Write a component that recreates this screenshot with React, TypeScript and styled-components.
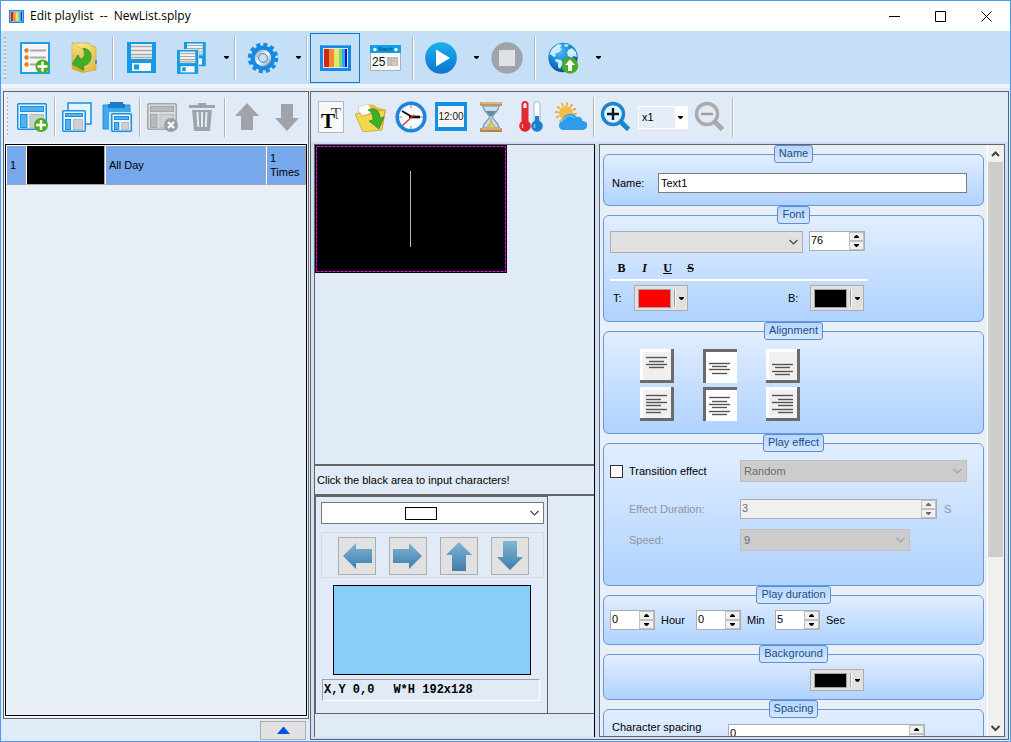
import React from "react";
import styled, { createGlobalStyle } from "styled-components";

const GlobalStyle = createGlobalStyle`
  *, *::before, *::after { box-sizing: border-box; }
  body { margin: 0; }
  body, button, input, select {
    font-family: "Liberation Sans", Arial, sans-serif;
    font-size: 11px;
    line-height: 14px;
    color: #000;
  }
  button { padding: 0; border: 0; background: none; }
  svg { display: block; flex: none; }
`;

const LINE = "#646464";

/* ---------- Window frame ---------- */

const Window = styled.div`
  display: flex;
  flex-direction: column;
  height: 100vh;
  border: 1px solid #4a9cf0;
  background: #e1ebf7;
  overflow: hidden;
`;

const TitleBar = styled.header`
  display: flex;
  align-items: center;
  flex: none;
  height: 30px;
  padding: 0 1px 0 8px;
  background: #fff;
`;

const Title = styled.h1`
  flex: 1;
  margin: 0 0 0 6px;
  font: 400 12px/16px "Open Sans", "Noto Sans", sans-serif;
  white-space: pre;
`;

const WindowButton = styled.button`
  display: grid;
  place-items: center;
  width: 46px;
  height: 28px;
`;

/* ---------- Toolbars ---------- */

const MainToolbar = styled.nav`
  display: flex;
  align-items: center;
  flex: none;
  height: 57px;
  padding: 0 0 4px 3px;
  background: linear-gradient(#c5dff6 53px, #edf5fd 53px);
`;

const PaneToolbar = styled.nav<{ $inset?: number }>`
  display: flex;
  align-items: center;
  flex: none;
  height: 50px;
  padding-left: ${(p) => p.$inset ?? 0}px;
  background: #e1ebf7;
`;

const Grip = styled.span<{ $size: number }>`
  width: 2px;
  height: ${(p) => p.$size}px;
  margin-right: 4px;
  background: repeating-linear-gradient(#b4b9c0 0 2px, #eef4fb 2px 4px);
`;

const ToolButton = styled.button<{ $size: number; $active?: boolean }>`
  display: grid;
  place-items: center;
  flex: none;
  width: ${(p) => p.$size}px;
  height: ${(p) => p.$size}px;
  border: 1px solid ${(p) => (p.$active ? "#0b7bd8" : "transparent")};
`;

const CaretButton = styled.button`
  display: flex;
  align-items: center;
  justify-content: flex-end;
  width: 16px;
  height: 48px;
  padding-right: 3px;
`;

const Separator = styled.span<{ $size: number; $slot: number }>`
  flex: none;
  width: ${(p) => p.$slot}px;
  height: ${(p) => p.$size}px;
  background: linear-gradient(90deg, #b4b8be 1px, #fff 1px) center / 2px 100% no-repeat;
`;

const ZoomBox = styled.div`
  display: grid;
  align-items: center;
  width: 50px;
  height: 23px;
  margin: 0 2px;
  border: 1px solid #fff;
  background: linear-gradient(90deg, #e6edf7 36px, #fff 36px);
  & > * { grid-area: 1 / 1; }
  & > svg { justify-self: end; margin-right: 4px; pointer-events: none; }
  select {
    appearance: none;
    width: 100%;
    padding: 0 3px;
    border: 0;
    background: none;
  }
`;

/* ---------- Work area ---------- */

const Workspace = styled.main`
  display: grid;
  grid-template-columns: 308px 1fr;
  flex: 1;
  min-height: 0;
  padding-top: 3px;
`;

const LeftColumn = styled.section`
  display: flex;
  flex-direction: column;
  min-height: 0;
  padding-left: 2px;
`;

const PlaylistPane = styled.div`
  display: flex;
  flex-direction: column;
  flex: 1;
  min-height: 0;
  padding: 0 1px 2px;
  border: 1px solid ${LINE};
  background: #f1f5fb;
`;

const ListBox = styled.div`
  flex: 1;
  margin-top: 2px;
  border: 1px solid #000;
  background: #e8eff7;
`;

const PlayTable = styled.table`
  width: 100%;
  border-spacing: 0;
  table-layout: fixed;
`;

const Cell = styled.td<{ $width?: number }>`
  width: ${(p) => (p.$width ? `${p.$width}px` : "auto")};
  height: 40px;
  padding: 0 3px;
  border: 1px solid #a3a6ab;
  border-top-color: #fff;
  border-left-color: #fff;
  background: #78a8ec;
`;

const ThumbCell = styled(Cell)`
  background: #000;
`;

const ListFooter = styled.footer`
  display: flex;
  justify-content: flex-end;
  align-items: center;
  flex: none;
  height: 22px;
  padding-right: 3px;
`;

const ExpandButton = styled.button`
  display: grid;
  place-items: center;
  width: 46px;
  height: 19px;
  border: 1px solid #adadad;
  background: #e1e1e1;
`;

const EditorPane = styled.section`
  display: flex;
  flex-direction: column;
  min-width: 0;
  min-height: 0;
  margin: 0 1px 1px;
  border: 1px solid ${LINE};
  background: #d0dff8;
`;

const EditorBody = styled.div`
  display: grid;
  grid-template-columns: 281px 1fr;
  column-gap: 4px;
  flex: 1;
  min-height: 0;
  margin: 2px 3px 2px 3px;
`;

const StageColumn = styled.div`
  display: flex;
  flex-direction: column;
  min-height: 0;
  border-top: 1px solid ${LINE};
  border-left: 1px solid ${LINE};
  border-right: 1px solid #000;
  background: #e1ebf7;
`;

const Stage = styled.div`
  flex: 1;
  min-height: 0;
  overflow: hidden;
`;

const Hint = styled.p`
  flex: none;
  height: 32px;
  margin: 0;
  padding: 7px 2px;
  border: solid ${LINE};
  border-width: 2px 0;
`;

const NavRow = styled.div`
  flex: none;
  margin-bottom: 23px;
  border-bottom: 1px solid ${LINE};
`;

const NavPanel = styled.div`
  display: flex;
  flex-direction: column;
  width: 233px;
  height: 217px;
  padding: 5px 3px 0 5px;
  border: solid ${LINE};
  border-width: 1px 1px 0;
`;

const ArrowGroup = styled.div`
  display: flex;
  justify-content: space-between;
  margin: 8px 0 7px;
  padding: 4px 14px 2px 16px;
  border: 1px solid #d8dadd;
`;

const ArrowButton = styled.button`
  display: grid;
  place-items: center;
  width: 38px;
  height: 38px;
  border: 1px solid #adadad;
  background: #e1e1e1;
`;

const Preview = styled.div`
  width: 198px;
  height: 90px;
  margin-left: 12px;
  border: 1px solid #000;
  background: #87cefa;
`;

const Coordinates = styled.div`
  display: flex;
  align-items: center;
  gap: 19px;
  height: 22px;
  margin: 4px 4px 0 1px;
  padding: 0 1px;
  border: 1px solid #fff;
  border-top-color: #a0a0a0;
  border-left-color: #a0a0a0;
  font: 700 12px/14px "Liberation Mono", monospace;
`;

/* ---------- Properties ---------- */

const Properties = styled.aside`
  display: flex;
  min-width: 0;
  min-height: 0;
  padding-right: 1px;
  border: 1px solid ${LINE};
  background: #e8eff7;
`;

const PropertyList = styled.div`
  flex: 1;
  min-width: 0;
  padding: 0 3px;
  overflow-y: auto;
  scrollbar-width: none;
`;

const Group = styled.fieldset<{ $size: number }>`
  min-width: 0;
  height: ${(p) => p.$size}px;
  margin: 0;
  padding: 0 6px;
  border: 1px solid #6a98d8;
  border-radius: 6px;
  background: linear-gradient(#e2eeff, #afd2ff);
`;

const Legend = styled.legend`
  height: 18px;
  margin: 0 auto;
  padding: 0 4px;
  border: 1px solid #5b8dd3;
  border-radius: 3px;
  background: linear-gradient(#b8d5fc, #d5e7ff);
  color: #15508a;
  line-height: 15px;
`;

const Row = styled.div<{ $top?: number; $gap?: number; $left?: number; $right?: number; $start?: boolean }>`
  display: flex;
  align-items: ${(p) => (p.$start ? "flex-start" : "center")};
  gap: ${(p) => p.$gap ?? 0}px;
  padding: ${(p) => `${p.$top ?? 0}px ${p.$right ?? 0}px 0 ${p.$left ?? 0}px`};
`;

const Label = styled.label<{ $width?: number; $dim?: boolean }>`
  flex: none;
  width: ${(p) => (p.$width ? `${p.$width}px` : "auto")};
  color: ${(p) => (p.$dim ? "#8f959d" : "#000")};
`;

const TextInput = styled.input`
  flex: 1;
  min-width: 0;
  height: 20px;
  padding: 0 2px;
  border: 1px solid #7a7a7a;
  background: #fff;
`;

const SelectShell = styled.div<{ $width?: number; $tone: "light" | "grey" | "dim" }>`
  display: grid;
  align-items: center;
  width: ${(p) => (p.$width ? `${p.$width}px` : "100%")};
  height: 22px;
  border: 1px solid ${(p) => ({ light: "#7a7a7a", grey: "#adadad", dim: "#bfbfbf" })[p.$tone]};
  background: ${(p) => ({ light: "#fff", grey: "#e1e1e1", dim: "#cccccc" })[p.$tone]};
  & > * { grid-area: 1 / 1; }
  & > svg { justify-self: end; margin-right: 3px; pointer-events: none; }
  select {
    appearance: none;
    width: 100%;
    height: 20px;
    padding: 0 3px;
    border: 0;
    background: none;
    color: #6d6d6d;
    opacity: 1;
  }
`;

const ShapeSwatch = styled.span`
  justify-self: center;
  width: 32px;
  height: 13px;
  margin-right: 24px;
  border: 1px solid #000;
  pointer-events: none;
`;

const SpinShell = styled.div<{ $width: number; $dim?: boolean }>`
  display: flex;
  flex: none;
  width: ${(p) => p.$width}px;
  height: 20px;
  border: 1px solid #abadb3;
  background: ${(p) => (p.$dim ? "#f0f0f0" : "#fff")};
  input {
    flex: 1;
    min-width: 0;
    padding: 0 0 2px 1px;
    border: 0;
    background: none;
    color: ${(p) => (p.$dim ? "#6d6d6d" : "#000")};
  }
`;

const SpinButtons = styled.span`
  display: flex;
  flex-direction: column;
  width: 15px;
  button {
    display: grid;
    place-items: center;
    flex: 1;
    border: 1px solid #c0c0c0;
    background: #f0f0f0;
  }
`;

const FormatButton = styled.button<{ $look: "b" | "i" | "u" | "s" }>`
  width: 23px;
  height: 20px;
  font: 700 12px/20px "Liberation Serif", serif;
  font-style: ${(p) => (p.$look === "i" ? "italic" : "normal")};
  text-decoration: ${(p) => ({ b: "none", i: "none", u: "underline", s: "line-through" })[p.$look]};
`;

const ColorButton = styled.button<{ $size: number }>`
  display: flex;
  align-items: center;
  flex: none;
  width: 54px;
  height: ${(p) => p.$size}px;
  padding: 3px;
  border: 1px solid #adadad;
  background: #e1e1e1;
`;

const Swatch = styled.span<{ $color: string; $size: number }>`
  width: 34px;
  height: ${(p) => p.$size}px;
  border: 1px solid #a0a0a0;
  background: ${(p) => p.$color};
`;

const Divider = styled.hr`
  width: 258px;
  height: 2px;
  margin: 1px 0 4px;
  border: 0;
  background: #fff;
`;

const ColorRow = styled.div`
  display: flex;
  align-items: center;
  justify-content: space-between;
  width: 254px;
  padding-left: 3px;
`;

const AlignGrid = styled.div`
  display: grid;
  grid-template-columns: repeat(3, 34px);
  gap: 4px 29px;
  padding: 9px 0 0 30px;
`;

const AlignButton = styled.button<{ $on?: boolean }>`
  height: 34px;
  padding: ${(p) => (p.$on ? "0" : "3px 0 0 3px")};
  border: solid #6b6b6b;
  border-width: ${(p) => (p.$on ? "3px 0 0 3px" : "0 3px 3px 0")};
  box-shadow: ${(p) => (p.$on ? "none" : "inset 3px 3px #fff")};
  background: ${(p) => (p.$on ? "#fff" : "#f0f0f0")};
`;

const CheckLabel = styled.label`
  display: flex;
  align-items: center;
  gap: 6px;
  flex: none;
  width: 130px;
  input {
    appearance: none;
    width: 13px;
    height: 13px;
    margin: 0;
    border: 1px solid #333;
    background: #fff;
  }
`;

const ScrollTrack = styled.div`
  display: flex;
  flex-direction: column;
  flex: none;
  width: 16px;
  border-left: 1px solid #fff;
  background: #f0f0f0;
`;

const ScrollButton = styled.button`
  display: grid;
  place-items: center;
  height: 17px;
`;

const ScrollRail = styled.div`
  flex: 1;
`;

const ScrollThumb = styled.div`
  height: 71%;
  background: #cdcdcd;
`;

/* ---------- Small glyphs ---------- */

const Caret = () => (
  <svg width="5" height="3" viewBox="0 0 5 3"><path d="M0 0h5v1L3 3H2L0 1z" /></svg>
);

const Chevron = ({ up, color = "#444", w = 1.2 }: { up?: boolean; color?: string; w?: number }) => (
  <svg width="11" height="8" viewBox="0 0 11 8">
    <path d={up ? "M2 6l3.5-3.5L9 6" : "M1.500 2l4 4 4-4"} fill="none" stroke={color} strokeWidth={w} />
  </svg>
);

const Triangle = ({ up, color = "#000" }: { up?: boolean; color?: string }) => (
  <svg width="5" height="3" viewBox="0 0 5 3"><path d={up ? "M0 3V2l2-2h1l2 2v1z" : "M0 0v1l2 2h1l2-2V0z"} fill={color} /></svg>
);

/* ---------- Icons ---------- */

const Plus = ({ x, y, r = 7 }: { x: number; y: number; r?: number }) => (
  <g>
    <circle cx={x} cy={y} r={r} fill="#4aac27" />
    <path d={`M${x - 5} ${y}h10M${x} ${y - 5}v10`} stroke="#fff" strokeWidth="2.4" />
  </g>
);

const SpectrumIcon = ({ width, height }: { width: number; height: number }) => (
  <svg width={width} height={height} viewBox="0 0 31 26" preserveAspectRatio="none">
    <rect width="31" height="26" fill="#1689e6" />
    <rect x="3" y="3" width="25" height="20" fill="#dfe6ea" />
    <path d="M4 4h5v18H4z" fill="#d9260f" />
    <path d="M9 4h5v18H9z" fill="#ee8b35" />
    <path d="M14 4h5v18h-5z" fill="#e9e56a" />
    <path d="M19 4h3v18h-3z" fill="#6fdc84" />
    <path d="M22 4h3v18h-3z" fill="#35a5ee" />
    <path d="M25 4h2v18h-2z" fill="#1010e0" />
    <path d="M1 .5h29" stroke="#47a9f2" />
  </svg>
);

const NewListIcon = () => (
  <svg width="32" height="32" viewBox="0 0 32 32">
    <rect x="2" y="1" width="28" height="30" fill="#f6f6f6" stroke="#1b9fea" strokeWidth="2" />
    {[8, 15, 22].map((y) => (
      <g key={y}>
        <circle cx="7.500" cy={y + 0.5} r="2.200" fill="#ee7a1c" />
        <path d={`M11 ${y + 0.5}h16`} stroke="#a9a9a9" strokeWidth="2" />
      </g>
    ))}
    <Plus x={23.5} y={24.500} />
  </svg>
);

const OpenIcon = () => (
  <svg width="28" height="32" viewBox="0 0 28 32">
    <defs>
      <linearGradient id="openFolder" x1="0" y1="0" x2="1" y2="1">
        <stop offset="0" stopColor="#fdf0a0" /><stop offset="1" stopColor="#e3b53a" />
      </linearGradient>
      <linearGradient id="openCover" x1="0" y1="0" x2="0" y2="1">
        <stop offset="0" stopColor="#f8e588" /><stop offset="1" stopColor="#cf9d22" />
      </linearGradient>
    </defs>
    <path d="M1 1h17l2 3 5 1v23l-12 2z" fill="url(#openFolder)" stroke="#cfa93c" strokeWidth=".8" />
    <path d="M24 18h2v4h-2z" fill="#4a8fdc" />
    <path d="M1 1l12 7v23L1 27z" fill="url(#openCover)" stroke="#d6b64c" strokeWidth=".8" />
    <path d="M12 6c6 1 9 5 8 10-1 5-4 7-8 8l1 4L1 22l6-9 2 4c5 0 6-6 3-11z" fill="#3fae2a" stroke="#22871a" strokeWidth=".6" />
  </svg>
);

const Disk = () => (
  <g>
    <path d="M0 0h29v31H0z" fill="#149be6" />
    <path d="M4 2h21v15H4z" fill="#f1f1f1" />
    <path d="M4 4.500h21M4 8.500h21M4 12.500h21M4 15.500h21" stroke="#a7a9ab" strokeWidth="1.500" />
    <path d="M5 21h19v8H5z" fill="#f7f7f7" />
    <path d="M7 22.500h5v5H7z" fill="#149be6" />
  </g>
);

const SaveIcon = () => <svg width="29" height="31" viewBox="0 0 29 31"><Disk /></svg>;

const SaveAllIcon = () => (
  <svg width="30" height="32" viewBox="0 0 30 32">
    <g transform="translate(8) scale(.75 .78)"><Disk /></g>
    <path d="M0 7h23v25H0z" fill="#c5dff6" />
    <g transform="translate(1 8) scale(.73 .77)"><Disk /></g>
  </svg>
);

const GearIcon = () => (
  <svg width="32" height="32" viewBox="0 0 32 32">
    <defs>
      <linearGradient id="gearRing" x1="0" y1="0" x2="1" y2="1">
        <stop offset="0" stopColor="#a2abb5" /><stop offset=".5" stopColor="#fff" /><stop offset="1" stopColor="#98a4b0" />
      </linearGradient>
    </defs>
    <circle cx="16" cy="16" r="13.500" fill="none" stroke="#128be0" strokeWidth="3.500" strokeDasharray="4 3.070" />
    <circle cx="16" cy="16" r="12.400" fill="#128be0" />
    <circle cx="16" cy="16" r="6.300" fill="none" stroke="url(#gearRing)" strokeWidth="4" />
    <circle cx="16" cy="16" r="4.400" fill="#c5e0f5" stroke="#3f87c4" strokeWidth="1" />
  </svg>
);

const CalendarIcon = () => (
  <svg width="31" height="26" viewBox="0 0 31 26">
    <path d="M.500 .500h30v25H.500z" fill="#f7f8f8" stroke="#aab0b6" />
    <path d="M0 0h31v8H0z" fill="#11a0e8" />
    <circle cx="5" cy="4.500" r="1.700" fill="#fff" /><circle cx="26" cy="4.500" r="1.700" fill="#fff" />
    <text x="15.500" y="6" fontSize="5" textAnchor="middle" fill="#063a64">March</text>
    <text x="2" y="21" fontSize="12" fill="#111">25</text>
    <path d="M17 12h11v9H17z" fill="#b6b6b6" />
    <path d="M17 15h11M17 18h11M20 12v9M23 12v9M26 12v9" stroke="#d5d5d5" strokeWidth=".6" />
    <path d="M22 17h4v3h-4z" fill="#efc6a6" />
  </svg>
);

const PlayIcon = () => (
  <svg width="32" height="32" viewBox="0 0 32 32">
    <defs>
      <linearGradient id="play" x1="0" y1="0" x2="0" y2="1">
        <stop offset="0" stopColor="#19b0f3" /><stop offset="1" stopColor="#0b75cc" />
      </linearGradient>
    </defs>
    <circle cx="16" cy="16" r="15.800" fill="url(#play)" />
    <path d="M11 7.500L25 16 11 24.500z" fill="#fff" />
  </svg>
);

const StopIcon = () => (
  <svg width="32" height="32" viewBox="0 0 32 32">
    <circle cx="16" cy="16" r="15.700" fill="#9fa4aa" />
    <path d="M8 8h16v16H8z" fill="#dfe2e5" />
  </svg>
);

const GlobeIcon = () => (
  <svg width="31" height="32" viewBox="0 0 31 32">
    <defs>
      <radialGradient id="globe" cx=".4" cy=".3" r=".7">
        <stop offset="0" stopColor="#4cbcf2" /><stop offset=".6" stopColor="#1183d4" /><stop offset="1" stopColor="#0a4ca0" />
      </radialGradient>
    </defs>
    <circle cx="15" cy="15.500" r="14.700" fill="url(#globe)" />
    <path d="M4 7l6-5 4 1-2 3 2 1-3 3-4 2 1 2-2 1-4-3-1 1zM17 2l4 1-2 2-3-1zM20 8l4-2 4 4 1 5-4-1-1 2-4-2-1-3zM8 17l5 1 2 3-3 6-2-2 0-4-3-2z" fill="#cfeafb" />
    <circle cx="22" cy="23.500" r="8.300" fill="#4aab26" />
    <path d="M22 17.500l5 5.500h-3v6h-4v-6h-3z" fill="#fff" />
  </svg>
);

const Layout = ({ w, h, grey }: { w: number; h: number; grey?: boolean }) => {
  const line = grey ? "#a3a7ac" : "#1d8fe0";
  const fill = grey ? "#b6babf" : "#4fb4ee";
  return (
    <g>
      <rect x=".750" y=".750" width={w - 1.5} height={h - 1.5} rx="1" fill={grey ? "#d9dcdf" : "#e6f5fe"} stroke={line} strokeWidth="1.500" />
      <rect x="3.500" y="3.500" width={w - 7} height={h > 24 ? 5 : 3} fill={fill} stroke={line} />
      <rect x="3.500" y={h > 24 ? 11.5 : 9.5} width={w / 4 - 1} height={h > 24 ? h - 14 : h - 12} fill={fill} stroke={line} />
      <rect x={w / 4 + 5.5} y={h > 24 ? 11.5 : 9.5} width={w * 0.75 - 9} height={h > 24 ? h - 14 : h - 12} fill="#cfcfcf" stroke="#b9bbbd" />
    </g>
  );
};

const AddProgramIcon = () => (
  <svg width="32" height="32" viewBox="0 0 32 32">
    <g transform="translate(1 2)"><Layout w={30} h={27} /></g>
    <Plus x={25} y={24} />
  </svg>
);

const CopyIcon = () => (
  <svg width="30" height="30" viewBox="0 0 30 30">
    <rect x="6" y="1" width="23" height="21" fill="#e3f4fe" stroke="#1d8fe0" strokeWidth="1.500" />
    <g transform="translate(0 8)"><Layout w={24} h={22} /></g>
  </svg>
);

const PasteIcon = () => (
  <svg width="31" height="31" viewBox="0 0 31 31">
    <path d="M1 3h27v24H1z" fill="#3fa9ea" stroke="#1d8fe0" />
    <path d="M8 0h13v2h2v4H6V2h2z" fill="#1b7cc8" />
    <path d="M7 10h24v21H7z" fill="#c8e6fa" />
    <g transform="translate(9 11)"><Layout w={21} h={19} /></g>
  </svg>
);

const RemoveProgramIcon = () => (
  <svg width="32" height="32" viewBox="0 0 32 32">
    <g transform="translate(1 2)"><Layout w={30} h={27} grey /></g>
    <circle cx="25" cy="24" r="7" fill="#9b9fa4" />
    <path d="M22 21l6 6M28 21l-6 6" stroke="#fff" strokeWidth="2.200" />
  </svg>
);

const TrashIcon = () => (
  <svg width="26" height="28" viewBox="0 0 26 28">
    <path d="M9 0h8v2h9v3H0V2h9zM3 7h20l-2 21H5z" fill="#a0a4aa" />
    <path d="M8.500 9l.8 15M13 9v15M17.500 9l-.8 15" stroke="#e1ebf7" strokeWidth="2" />
  </svg>
);

const turns = { up: 0, right: 90, down: 180, left: 270 };

const GreyArrow = ({ to }: { to: "up" | "down" }) => (
  <svg width="28" height="28" viewBox="0 0 28 28">
    <path d="M14 0l12 13h-6v14H8V13H2z" fill="#a0a4aa" transform={`rotate(${turns[to]} 14 14)`} />
  </svg>
);

const arrowPaths = {
  up: "M15 1l13 13h-6v16H8V14H2z",
  down: "M15 29l13-13h-6V0H8v16H2z",
  left: "M1 15L14 2v6h16v14H14v6z",
  right: "M29 15L16 2v6H0v14h16v6z",
};

const BlueArrow = ({ to }: { to: keyof typeof arrowPaths }) => (
  <svg width="30" height="30" viewBox="0 0 30 30">
    <defs>
      <linearGradient id={`arrow-${to}`} x1="0" y1="0" x2="0" y2="1">
        <stop offset="0" stopColor="#82b4d5" /><stop offset="1" stopColor="#3f7dab" />
      </linearGradient>
    </defs>
    <path d={arrowPaths[to]} fill={`url(#arrow-${to})`} />
  </svg>
);

const TextIcon = () => (
  <svg width="26" height="32" viewBox="0 0 26 32">
    <path d="M.500 .500h25v31H.500z" fill="#f8f8f8" stroke="#b2b7bc" />
    <text x="18" y="18" fontSize="17" textAnchor="middle" fontFamily="Liberation Serif" fill="#555">T</text>
    <text x="10" y="27" fontSize="21" fontWeight="700" textAnchor="middle" fontFamily="Liberation Serif" stroke="#f8f8f8" strokeWidth="2" paintOrder="stroke">T</text>
  </svg>
);

const ImportIcon = () => (
  <svg width="32" height="30" viewBox="0 0 32 30">
    <path d="M11 2l8 1 2 2 10 3-3 16-13-3z" fill="#e0bd38" />
    <path d="M3 5l10-3 5 8-13 6z" fill="#fbfbfb" stroke="#c9c9c9" strokeWidth=".7" />
    <path d="M0 12l5-1 2 3 13-3 2-2 8-1-3 20-19 2z" fill="#f0d750" stroke="#c49a22" strokeWidth=".7" />
    <path d="M13 8c6-3 12 0 12 8l4-1-5 12-10-8 4-1c0-5-1-8-5-10z" fill="#3dae2a" stroke="#23821a" strokeWidth=".6" />
  </svg>
);

const ClockIcon = () => (
  <svg width="32" height="32" viewBox="0 0 32 32">
    <circle cx="16" cy="16" r="13.800" fill="#fafafa" stroke="#1c86de" strokeWidth="3.600" />
    <path d="M16 4v3M16 25v3M4 16h3M25 16h3" stroke="#888" />
    <path d="M7 10l11 6.500" stroke="#111" strokeWidth="2" />
    <path d="M14 16h11" stroke="#111" strokeWidth="2.600" />
    <path d="M19 14L7.500 24.500" stroke="#d92b2b" strokeWidth="1.300" />
  </svg>
);

const DigitalIcon = () => (
  <svg width="32" height="30" viewBox="0 0 32 30">
    <path d="M0 0h32v29H0z" fill="#1291e2" />
    <path d="M3 4h26v21H3z" fill="#f5f5f5" />
    <text x="16" y="18" fontSize="10" textAnchor="middle" fontFamily="Liberation Sans" fill="#151515">12:00</text>
  </svg>
);

const HourglassIcon = () => (
  <svg width="22" height="30" viewBox="0 0 22 30">
    <path d="M3 4h16c0 5-6 8-6.500 11C13 18 19 21 19 26H3c0-5 6-8 6.500-11C9 12 3 9 3 4z" fill="#c4deee" stroke="#7194ad" strokeWidth="1.200" />
    <path d="M6 9h10l-5 6z" fill="#5f87a2" />
    <path d="M11 16v4l-5 6h10l-5-7z" fill="#d9c777" stroke="#c0ab55" />
    <rect x="0" y="0" width="22" height="4" rx="1" fill="#bf965f" />
    <rect x="0" y="26" width="22" height="4" rx="1" fill="#b58547" />
    <path d="M1 1h20M1 27h20" stroke="#ecd6ad" />
  </svg>
);

const ThermometerIcon = () => (
  <svg width="24" height="32" viewBox="0 0 24 32">
    <path d="M2.500 3.500a3.500 3.500 0 017 0V21h-7z" fill="#e32a2e" /><circle cx="6" cy="25" r="5.800" fill="#e3242b" />
    <path d="M4.500 3.500a1.500 1.500 0 013 0V7h-3z" fill="#fff" />
    <path d="M3.500 23v4" stroke="#f8a0a0" strokeWidth="1.500" />
    <path d="M15 3.500a3 3 0 016 0V20h-6z" fill="#fff" stroke="#92b9d6" />
    <path d="M16 15h4v8h-4z" fill="#187fd1" /><circle cx="18" cy="25" r="5.800" fill="#187fd1" />
    <path d="M15.500 23v4" stroke="#85c0ee" strokeWidth="1.500" />
  </svg>
);

const WeatherIcon = () => (
  <svg width="32" height="30" viewBox="0 0 32 30">
    <circle cx="11" cy="11" r="9" fill="none" stroke="#e9a92a" strokeWidth="3.500" strokeDasharray="1.700 3" />
    <circle cx="11" cy="11" r="7" fill="#f4bd45" />
    <path d="M8 28c-5 0-5.500-8-.5-9 0-7 10-10 14-4 4-1 6 2 6 4 7 0 6 9 0 9z" fill="#2f9ceb" />
    <path d="M9 18c1-4 7-6 10-2" fill="none" stroke="#6abdf5" strokeWidth="1.500" />
  </svg>
);

const MagnifierIcon = ({ grey }: { grey?: boolean }) => {
  const c = grey ? "#a8abb0" : "#1c85cf";
  return (
    <svg width="32" height="32" viewBox="0 0 32 32">
      <path d="M20 20l8.500 8.500" stroke={c} strokeWidth="5" />
      <circle cx="13" cy="13" r="10.500" fill={grey ? "#e6e9ed" : "#e2f4fc"} stroke={c} strokeWidth="3.400" />
      <path d={grey ? "M7 13h12" : "M7 13h12M13 7v12"} stroke={grey ? "#9a9da2" : "#0c1b26"} strokeWidth="2.400" />
    </svg>
  );
};

/* Each line of text in an alignment tile: top, left, width */
const alignments: Record<string, number[][]> = {
  "Align top": [[5, 3, 21], [9, 6, 15], [12, 3, 21], [15, 6, 15]],
  "Align middle": [[9, 3, 21], [12, 6, 15], [15, 3, 21], [19, 6, 15]],
  "Align bottom": [[12, 3, 21], [15, 6, 15], [19, 3, 21], [22, 6, 15]],
  "Align left": [[5, 3, 21], [9, 3, 15], [12, 3, 21], [15, 3, 15], [19, 3, 21], [22, 3, 15]],
  "Align center": [[5, 3, 21], [9, 6, 15], [12, 3, 21], [15, 6, 15], [19, 3, 21], [22, 6, 15]],
  "Align right": [[5, 3, 21], [9, 9, 15], [12, 3, 21], [15, 9, 15], [19, 3, 21], [22, 9, 15]],
};

/* ---------- Composite controls ---------- */

const Spin = ({ id, value, width, dim, label }: { id?: string; value: string; width: number; dim?: boolean; label?: string }) => (
  <SpinShell $width={width} $dim={dim}>
    <input id={id} aria-label={label} defaultValue={value} disabled={dim} />
    <SpinButtons>
      <button aria-label="Increase" disabled={dim}><Triangle up color={dim ? "#6d6d6d" : "#000"} /></button>
      <button aria-label="Decrease" disabled={dim}><Triangle color={dim ? "#6d6d6d" : "#000"} /></button>
    </SpinButtons>
  </SpinShell>
);

const ColorPicker = ({ id, color, size = 26 }: { id?: string; color: string; size?: number }) => (
  <ColorButton id={id} $size={size} aria-label="Choose color">
    <Swatch $color={color} $size={size === 26 ? 19 : 15} />
    <svg width="5" height={size - 8} viewBox="0 0 5 18" preserveAspectRatio="none">
      <path d="M3.500 0v18" stroke="#a0a0a0" /><path d="M4.500 0v18" stroke="#fff" />
    </svg>
    <Row $left={3}><Caret /></Row>
  </ColorButton>
);

const Tool = ({ name, size = 40, active, children }: { name: string; size?: number; active?: boolean; children: React.ReactNode }) => (
  <ToolButton $size={size} $active={active} aria-label={name}>{children}</ToolButton>
);

const More = ({ name }: { name: string }) => <CaretButton aria-label={name}><Caret /></CaretButton>;

export default function App() {
  return (
    <Window>
      <GlobalStyle />
      <TitleBar>
        <SpectrumIcon width={15} height={13} />
        <Title>{"Edit playlist  --  NewList.splpy"}</Title>
        <WindowButton aria-label="Minimize"><svg width="11" height="11"><path d="M0 5.500h11" stroke="#000" /></svg></WindowButton>
        <WindowButton aria-label="Maximize"><svg width="11" height="11"><path d="M.500 .500h10v10H.500z" fill="none" stroke="#000" /></svg></WindowButton>
        <WindowButton aria-label="Close"><svg width="11" height="11"><path d="M.500 .500l10 10M10.500 .500l-10 10" stroke="#000" /></svg></WindowButton>
      </TitleBar>

      <MainToolbar>
        <Grip $size={42} />
        <Tool size={50} name="New list"><NewListIcon /></Tool>
        <Tool size={50} name="Open"><OpenIcon /></Tool>
        <Separator $size={44} $slot={6} />
        <Tool size={50} name="Save"><SaveIcon /></Tool>
        <Tool size={50} name="Save all"><SaveAllIcon /></Tool>
        <More name="Save options" />
        <Separator $size={44} $slot={6} />
        <Tool size={50} name="Settings"><GearIcon /></Tool>
        <More name="Settings options" />
        <Separator $size={44} $slot={6} />
        <Tool size={50} name="Playlist view" active><SpectrumIcon width={31} height={26} /></Tool>
        <Tool size={50} name="Schedule"><CalendarIcon /></Tool>
        <Separator $size={44} $slot={6} />
        <Tool size={50} name="Play"><PlayIcon /></Tool>
        <More name="Play options" />
        <Tool size={50} name="Stop"><StopIcon /></Tool>
        <Separator $size={44} $slot={6} />
        <Tool size={50} name="Publish"><GlobeIcon /></Tool>
        <More name="Publish options" />
      </MainToolbar>

      <Workspace>
        <LeftColumn>
          <PlaylistPane>
            <PaneToolbar $inset={2}>
              <Grip $size={40} />
              <Tool name="Add program"><AddProgramIcon /></Tool>
              <Separator $size={40} $slot={5} />
              <Tool name="Copy"><CopyIcon /></Tool>
              <Tool name="Paste"><PasteIcon /></Tool>
              <Separator $size={40} $slot={5} />
              <Tool name="Remove program"><RemoveProgramIcon /></Tool>
              <Tool name="Delete all"><TrashIcon /></Tool>
              <Separator $size={40} $slot={5} />
              <Tool name="Move up"><GreyArrow to="up" /></Tool>
              <Tool name="Move down"><GreyArrow to="down" /></Tool>
            </PaneToolbar>
            <ListBox>
              <PlayTable>
                <tbody>
                  <tr>
                    <Cell $width={20}>1</Cell>
                    <ThumbCell $width={79} aria-label="Preview" />
                    <Cell>All Day</Cell>
                    <Cell $width={40}>1<br />Times</Cell>
                  </tr>
                </tbody>
              </PlayTable>
            </ListBox>
          </PlaylistPane>
          <ListFooter>
            <ExpandButton aria-label="Expand">
              <svg width="13" height="7" viewBox="0 0 13 7"><path d="M0 7l6-7h1l6 7z" fill="#0a50e0" /></svg>
            </ExpandButton>
          </ListFooter>
        </LeftColumn>

        <EditorPane>
          <PaneToolbar>
            <Tool name="Text"><TextIcon /></Tool>
            <Tool name="File"><ImportIcon /></Tool>
            <Tool name="Clock"><ClockIcon /></Tool>
            <Tool name="Digital clock"><DigitalIcon /></Tool>
            <Tool name="Timer"><HourglassIcon /></Tool>
            <Tool name="Temperature"><ThermometerIcon /></Tool>
            <Tool name="Weather"><WeatherIcon /></Tool>
            <Separator $size={40} $slot={5} />
            <Tool name="Zoom in"><MagnifierIcon /></Tool>
            <ZoomBox>
              <select aria-label="Zoom"><option>x1</option></select>
              <Caret />
            </ZoomBox>
            <Tool name="Zoom out"><MagnifierIcon grey /></Tool>
            <Separator $size={40} $slot={5} />
          </PaneToolbar>

          <EditorBody>
            <StageColumn>
              <Stage>
                <svg width="192" height="128" viewBox="0 0 192 128">
                  <path d="M0 0h192v128H0z" />
                  <path d="M1.500 1.500h189v125H1.500z" fill="none" stroke="#ff00ff" strokeDasharray="3 1" />
                  <path d="M95.500 26v76" stroke="#b4b4b4" />
                </svg>
              </Stage>
              <Hint>Click the black area to input characters!</Hint>
              <NavRow>
                <NavPanel>
                  <SelectShell $tone="light">
                    <select aria-label="Area shape"><option /></select>
                    <ShapeSwatch />
                    <Chevron />
                  </SelectShell>
                  <ArrowGroup>
                    <ArrowButton aria-label="Left"><BlueArrow to="left" /></ArrowButton>
                    <ArrowButton aria-label="Right"><BlueArrow to="right" /></ArrowButton>
                    <ArrowButton aria-label="Up"><BlueArrow to="up" /></ArrowButton>
                    <ArrowButton aria-label="Down"><BlueArrow to="down" /></ArrowButton>
                  </ArrowGroup>
                  <Preview />
                  <Coordinates><span>X,Y 0,0</span><span>W*H 192x128</span></Coordinates>
                </NavPanel>
              </NavRow>
            </StageColumn>

            <Properties>
              <PropertyList>
                <Group $size={61}>
                  <Legend>Name</Legend>
                  <Row $top={10} $left={2} $right={10}>
                    <Label $width={46} htmlFor="name">Name:</Label>
                    <TextInput id="name" defaultValue="Text1" />
                  </Row>
                </Group>

                <Group $size={116}>
                  <Legend>Font</Legend>
                  <Row $top={7} $gap={6} $start>
                    <SelectShell $tone="grey" $width={193}>
                      <select aria-label="Font family"><option /></select>
                      <Chevron />
                    </SelectShell>
                    <Spin label="Font size" value="76" width={56} />
                  </Row>
                  <Row $top={5}>
                    <FormatButton $look="b">B</FormatButton>
                    <FormatButton $look="i">I</FormatButton>
                    <FormatButton $look="u">U</FormatButton>
                    <FormatButton $look="s">S</FormatButton>
                  </Row>
                  <Divider />
                  <ColorRow>
                    <Label $width={21} htmlFor="text-color">T:</Label>
                    <ColorPicker id="text-color" color="#ff0000" />
                    <Row $left={100}><Label $width={22} htmlFor="back-color">B:</Label></Row>
                    <ColorPicker id="back-color" color="#000" />
                  </ColorRow>
                </Group>

                <Group $size={112}>
                  <Legend>Alignment</Legend>
                  <AlignGrid>
                    {Object.entries(alignments).map(([name, lines], i) => (
                      <AlignButton key={name} aria-label={name} aria-pressed={i % 3 === 1} $on={i % 3 === 1}>
                        <svg width="28" height="28" viewBox="0 0 28 28">
                          {lines.map(([y, x, w]) => (
                            <path key={y} d={`M${x} ${y + 0.5}h${w}`} stroke="#555" strokeWidth="1.4" />
                          ))}
                        </svg>
                      </AlignButton>
                    ))}
                  </AlignGrid>
                </Group>

                <Group $size={152}>
                  <Legend>Play effect</Legend>
                  <Row $top={8} $right={10}>
                    <CheckLabel><input type="checkbox" />Transition effect</CheckLabel>
                    <SelectShell $tone="dim">
                      <select aria-label="Transition effect" disabled><option>Random</option></select>
                      <Chevron color="#a0a0a0" />
                    </SelectShell>
                  </Row>
                  <Row $top={17} $left={19} $gap={7}>
                    <Label $width={104} $dim htmlFor="effect-duration">Effect Duration:</Label>
                    <Spin id="effect-duration" value="3" width={197} dim />
                    <Label as="span" $dim>S</Label>
                  </Row>
                  <Row $top={10} $left={19} $gap={7}>
                    <Label $width={104} $dim htmlFor="speed">Speed:</Label>
                    <SelectShell $tone="dim" $width={170}>
                      <select id="speed" disabled><option>9</option></select>
                      <Chevron color="#a0a0a0" />
                    </SelectShell>
                  </Row>
                </Group>

                <Group $size={59}>
                  <Legend>Play duration</Legend>
                  <Row $top={6} $gap={6}>
                    <Spin id="hour" value="0" width={45} />
                    <Label $width={29} htmlFor="hour">Hour</Label>
                    <Spin id="min" value="0" width={45} />
                    <Label $width={22} htmlFor="min">Min</Label>
                    <Spin id="sec" value="5" width={45} />
                    <Label htmlFor="sec">Sec</Label>
                  </Row>
                </Group>

                <Group $size={55}>
                  <Legend>Background</Legend>
                  <Row $top={6} $left={200}>
                    <ColorPicker color="#000" size={22} />
                  </Row>
                </Group>

                <Group $size={112}>
                  <Legend>Spacing</Legend>
                  <Row $top={2} $left={2} $start>
                    <Label $width={116} htmlFor="spacing">Character spacing</Label>
                    <Row $top={4}><Spin id="spacing" value="0" width={197} /></Row>
                  </Row>
                </Group>
              </PropertyList>
              <ScrollTrack>
                <ScrollButton aria-label="Scroll up"><Chevron up w={2} /></ScrollButton>
                <ScrollRail><ScrollThumb /></ScrollRail>
                <ScrollButton aria-label="Scroll down"><Chevron w={2} /></ScrollButton>
              </ScrollTrack>
            </Properties>
          </EditorBody>
        </EditorPane>
      </Workspace>
    </Window>
  );
}
